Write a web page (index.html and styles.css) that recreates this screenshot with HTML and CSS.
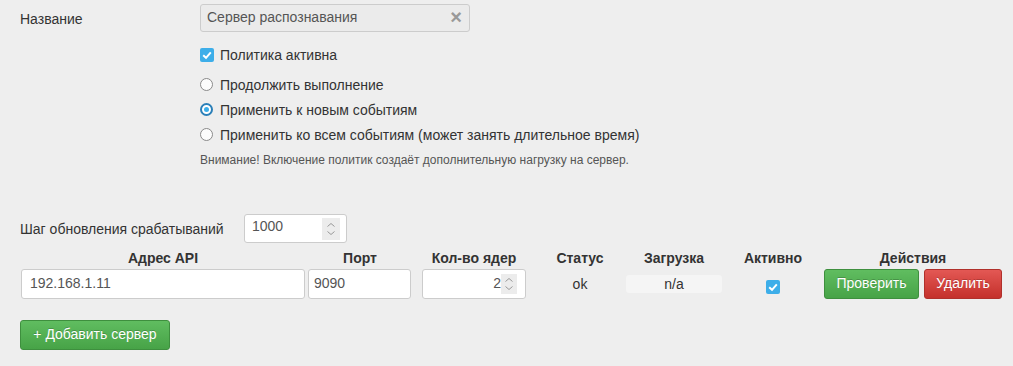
FILE: index.html
```html
<!DOCTYPE html>
<html lang="ru">
<head>
    <meta charset="UTF-8">
    <link rel="stylesheet" href="styles.css">
    <title>Политика</title>
</head>
<body>
    <div class="form">
        <div class="name-row">
            <label class="label">Название</label>
            <div class="name-input">
                <span>Сервер распознавания</span>
                <span class="clear">&#215;</span>
            </div>
        </div>

        <div class="options">
            <div class="option check-line">
                <span class="checkbox"><svg viewBox="0 0 14 14" width="14" height="14"><path d="M3.2 7.2 L6 9.8 L10.8 4.4" fill="none" stroke="#fff" stroke-width="2"/></svg></span>
                <span>Политика активна</span>
            </div>
            <div class="option radio-first">
                <span class="radio"></span>
                <span>Продолжить выполнение</span>
            </div>
            <div class="option">
                <span class="radio checked"></span>
                <span>Применить к новым событиям</span>
            </div>
            <div class="option">
                <span class="radio"></span>
                <span>Применить ко всем событиям (может занять длительное время)</span>
            </div>
            <div class="note">Внимание! Включение политик создаёт дополнительную нагрузку на сервер.</div>
        </div>

        <div class="step-row">
            <label class="step-label">Шаг обновления срабатываний</label>
            <div class="input step-input">
                <span class="value">1000</span>
                <span class="spinner"><svg viewBox="0 0 18 22" width="18" height="22"><path d="M5.5 8.5 L9 5.5 L12.5 8.5 M5.5 13.5 L9 16.5 L12.5 13.5" fill="none" stroke="#999" stroke-width="1"/></svg></span>
            </div>
        </div>

        <table class="servers">
            <colgroup>
                <col style="width: 286px">
                <col style="width: 108px">
                <col style="width: 120px">
                <col style="width: 92px">
                <col style="width: 96px">
                <col style="width: 102px">
                <col style="width: 178px">
            </colgroup>
            <tr class="head">
                <th>Адрес API</th>
                <th>Порт</th>
                <th>Кол-во ядер</th>
                <th>Статус</th>
                <th>Загрузка</th>
                <th>Активно</th>
                <th>Действия</th>
            </tr>
            <tr class="row">
                <td><div class="input addr-input">192.168.1.11</div></td>
                <td><div class="input port-input">9090</div></td>
                <td>
                    <div class="input cores-input">
                        <span class="value">2</span>
                        <span class="spinner small"><svg viewBox="0 0 16 20" width="16" height="20"><path d="M4.5 7.5 L8 4.5 L11.5 7.5 M4.5 12.5 L8 15.5 L11.5 12.5" fill="none" stroke="#999" stroke-width="1"/></svg></span>
                    </div>
                </td>
                <td class="status">ok</td>
                <td><div class="load">n/a</div></td>
                <td class="active">
                    <span class="checkbox"><svg viewBox="0 0 14 14" width="14" height="14"><path d="M3.2 7.2 L6 9.8 L10.8 4.4" fill="none" stroke="#fff" stroke-width="2"/></svg></span>
                </td>
                <td>
                    <div class="actions">
                        <a class="btn btn-green check-btn">Проверить</a>
                        <a class="btn btn-red delete-btn">Удалить</a>
                    </div>
                </td>
            </tr>
        </table>

        <a class="btn btn-green add-btn">+ Добавить сервер</a>
    </div>
</body>
</html>
```

FILE: styles.css
```css
body {
    margin: 0;
    background-color: #eeeeee;
    font-family: "Liberation Sans", Arial, sans-serif;
    font-size: 14px;
    color: #333;
}

.form {
    padding-left: 20px;
    padding-top: 4px;
}

/* Название */
.name-row {
    display: flex;
    align-items: center;
    height: 28px;
}

.label {
    width: 180px;
    padding-top: 2px;
}

.name-input {
    box-sizing: border-box;
    width: 270px;
    height: 28px;
    border: 1px solid #ccc;
    border-radius: 3px;
    background-color: #ebebeb;
    color: #555;
    display: flex;
    align-items: center;
    justify-content: space-between;
    padding: 0 7px 3px 6px;
}

.clear {
    color: #999;
    font-weight: bold;
    font-size: 20px;
    line-height: 20px;
}

/* Опции */
.options {
    margin-left: 180px;
    margin-top: 10px;
}

.option {
    display: flex;
    align-items: center;
    height: 25px;
}

.radio-first {
    margin-top: 5px;
}

.checkbox {
    display: inline-block;
    width: 14px;
    height: 14px;
    border-radius: 2px;
    background-color: #3daee9;
    margin-right: 6px;
}

.checkbox svg {
    display: block;
}

.radio {
    box-sizing: border-box;
    display: inline-block;
    width: 13px;
    height: 13px;
    border: 1px solid #8a8a8a;
    border-radius: 50%;
    background-color: #fcfcfc;
    margin-right: 7px;
    position: relative;
}

.radio.checked {
    border: 2px solid #2a7fb8;
    background-color: #fff;
}

.radio.checked::after {
    content: "";
    position: absolute;
    left: 2px;
    top: 2px;
    width: 5px;
    height: 5px;
    border-radius: 50%;
    background-color: #3daee9;
}

.note {
    margin-top: 5px;
    font-size: 12px;
    line-height: 17px;
    color: #555;
}

/* Шаг обновления */
.step-row {
    display: flex;
    align-items: center;
    margin-top: 45px;
    height: 29px;
}

.step-label {
    width: 224px;
}

.input {
    box-sizing: border-box;
    border: 1px solid #ccc;
    border-radius: 3px;
    background-color: #fff;
    color: #555;
    display: flex;
    align-items: center;
}

.step-input {
    width: 103px;
    height: 29px;
    padding: 0 6px 5px 7px;
    justify-content: space-between;
}

.spinner {
    display: block;
    background-color: #ececec;
    margin-top: 5px;
}

.spinner svg {
    display: block;
}

/* Таблица серверов */
.servers {
    border-collapse: collapse;
    table-layout: fixed;
    width: 982px;
    margin-top: 4px;
}

.servers td,
.servers th {
    padding: 0;
}

.head th {
    height: 22px;
    font-weight: bold;
    text-align: center;
    vertical-align: middle;
}

.row td {
    height: 30px;
    vertical-align: middle;
}

.addr-input {
    width: 284px;
    height: 30px;
    margin-left: 1px;
    padding: 0 8px 2px;
}

.port-input {
    width: 103px;
    height: 30px;
    margin-left: 2px;
    padding: 0 5px 2px;
}

.cores-input {
    width: 104px;
    height: 30px;
    margin-left: 8px;
    padding: 0 8px 0 0;
    justify-content: flex-end;
}

.cores-input .value {
    margin-bottom: 2px;
}

.spinner.small {
    margin: 0;
}

.status {
    text-align: center;
    color: #333;
}

.load {
    height: 18px;
    line-height: 18px;
    background-color: #f5f5f5;
    border-radius: 3px;
    text-align: center;
}

.active {
    text-align: center;
}

.active .checkbox {
    display: inline-block;
    margin: 6px 0 0;
    vertical-align: middle;
}

.actions {
    display: flex;
    gap: 5px;
}

/* Кнопки */
.btn {
    box-sizing: border-box;
    display: inline-flex;
    align-items: center;
    justify-content: center;
    height: 30px;
    border-radius: 3px;
    color: #fff;
    text-decoration: none;
    text-shadow: 0 -1px 0 rgba(0, 0, 0, 0.2);
    padding-bottom: 2px;
}

.btn-green {
    background-image: linear-gradient(#60bd60, #47a347);
    border: 1px solid #3e8f3e;
}

.btn-red {
    background-image: linear-gradient(#e35854, #c4302b);
    border: 1px solid #b0302b;
}

.check-btn {
    width: 95px;
}

.delete-btn {
    width: 78px;
}

.add-btn {
    width: 150px;
    margin-top: 21px;
}
```
